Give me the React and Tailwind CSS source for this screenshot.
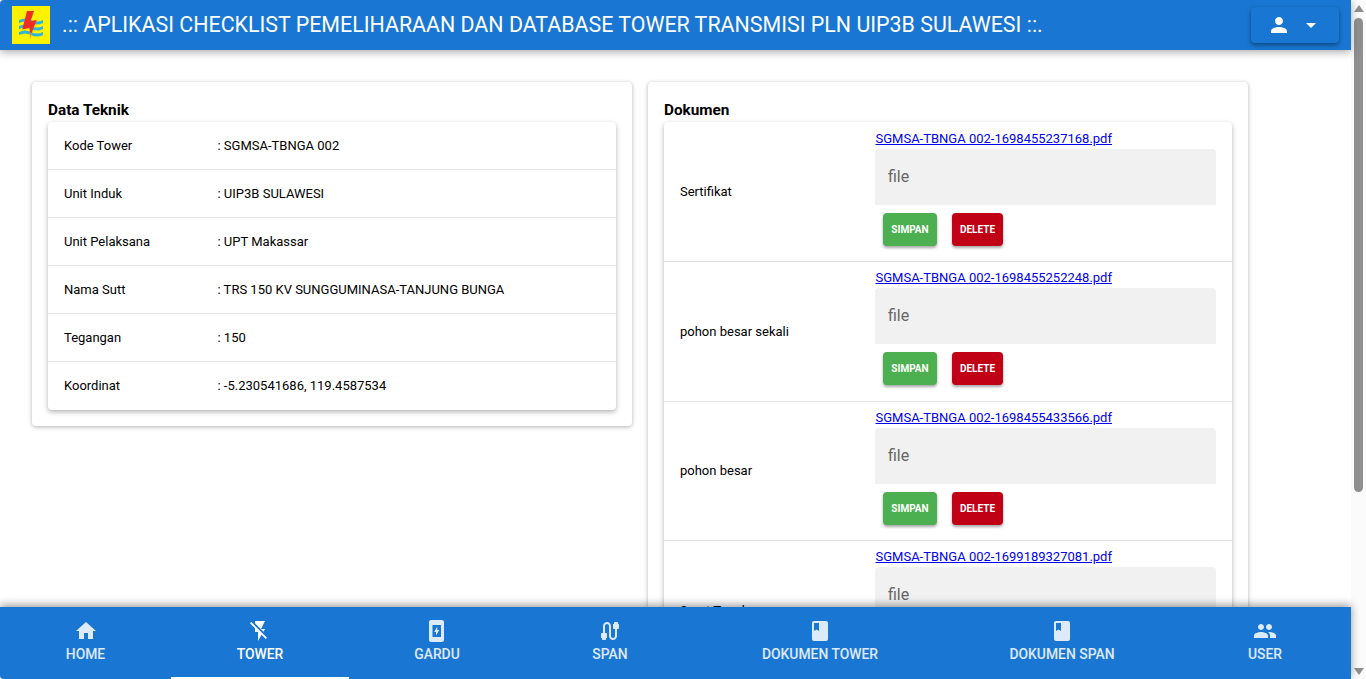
import React from "react";

const bookIcon = "M18 2H6c-1.1 0-2 .9-2 2v16c0 1.1.9 2 2 2h12c1.1 0 2-.9 2-2V4c0-1.1-.9-2-2-2zM6 4h5v8l-2.5-1.5L6 12V4z";

const navItems = [
  { label: "HOME", d: "M10 20v-6h4v6h5v-8h3L12 3 2 12h3v8z" },
  { label: "TOWER", active: true, d: "M3.27 3L2 4.27l5 5V13h3v9l3.58-6.14L17.73 20 19 18.73 3.27 3zM17 10h-4l4-8H7v2.18l8.46 8.46L17 10z" },
  { label: "GARDU", d: "M6 1h11c1.1 0 2 .9 2 2v18c0 1.1-.9 2-2 2H6c-1.100 0-2-.9-2-2V3c0-1.100.9-2 2-2zM7.500 6v12h8.500V6zM11 16.500v-3.500H9.200l3.100-5.500v3.500h1.900z" },
  { label: "SPAN", d: "M20 5V4c0-.55-.45-1-1-1h-2c-.55 0-1 .45-1 1v1h-1v4c0 .55.45 1 1 1h1v7c0 1.1-.9 2-2 2s-2-.9-2-2V7c0-2.21-1.79-4-4-4S5 4.79 5 7v7H4c-.55 0-1 .45-1 1v4h1v1c0 .55.45 1 1 1h2c.55 0 1-.45 1-1v-1h1v-4c0-.55-.45-1-1-1H7V7c0-1.1.9-2 2-2s2 .9 2 2v10c0 2.21 1.79 4 4 4s4-1.79 4-4v-7h1c.55 0 1-.45 1-1V5h-1z" },
  { label: "DOKUMEN TOWER", d: bookIcon },
  { label: "DOKUMEN SPAN", d: bookIcon },
  { label: "USER", d: "M16 11c1.66 0 2.99-1.34 2.99-3S17.66 5 16 5c-1.66 0-3 1.34-3 3s1.34 3 3 3zm-8 0c1.66 0 2.99-1.34 2.99-3S9.66 5 8 5C6.34 5 5 6.34 5 8s1.34 3 3 3zm0 2c-2.33 0-7 1.17-7 3.5V19h14v-2.5c0-2.33-4.67-3.5-7-3.5zm8 0c-.29 0-.62.02-.97.05 1.16.84 1.97 1.97 1.97 3.45V19h6v-2.5c0-2.33-4.67-3.5-7-3.5z" },
];

const teknik = [
  ["Kode Tower", ": SGMSA-TBNGA 002"],
  ["Unit Induk", ": UIP3B SULAWESI"],
  ["Unit Pelaksana", ": UPT Makassar"],
  ["Nama Sutt", ": TRS 150 KV SUNGGUMINASA-TANJUNG BUNGA"],
  ["Tegangan", ": 150"],
  ["Koordinat", ": -5.230541686, 119.4587534"],
];

const dokumen = [
  ["Sertifikat", "SGMSA-TBNGA 002-1698455237168.pdf"],
  ["pohon besar sekali", "SGMSA-TBNGA 002-1698455252248.pdf"],
  ["pohon besar", "SGMSA-TBNGA 002-1698455433566.pdf"],
  ["Surat Tanah", "SGMSA-TBNGA 002-1699189327081.pdf"],
];

const Logo = () => (
  <svg viewBox="0 0 38 38" className="w-[38px] h-[38px] shrink-0">
    <rect width="38" height="38" fill="#fff200" />
    <path d="M7 14c4-2 8-2 12 0s8 2 12 0v3c-4 2-8 2-12 0s-8-2-12 0z" fill="#2bb4dc" />
    <path d="M7 20c4-2 8-2 12 0s8 2 12 0v3c-4 2-8 2-12 0s-8-2-12 0z" fill="#2bb4dc" />
    <path d="M7 26c4-2 8-2 12 0s8 2 12 0v3c-4 2-8 2-12 0s-8-2-12 0z" fill="#2bb4dc" />
    <path d="M19.700 26l-1.400 7.500-.8-7z" fill="#f6921e" />
    <path d="M15 5h7l-3.300 10 6-1L19.700 27l-2-.5V22l-7.400 1.500z" fill="#ee2e24" />
  </svg>
);

const Card = ({ title, children }) => (
  <div className="w-[600px] shrink-0 self-start bg-white rounded shadow-[0_1px_4px_rgba(0,0,0,0.3)] px-4 pt-[18px] pb-4">
    <h2 className="text-[15.300px] leading-5 mb-[2px] font-bold text-black">{title}</h2>
    <div className="bg-white rounded shadow-[0_2px_5px_rgba(0,0,0,0.3)]">{children}</div>
  </div>
);

export default function App() {
  return (
    <div className="h-screen flex overflow-hidden bg-white font-['Roboto',sans-serif]">
      <div className="flex-1 min-w-0 flex flex-col">
        <header className="relative z-10 h-[50px] shrink-0 flex items-center bg-[#1976d2] pl-3 pr-3 rounded-tl shadow-[0_2px_8px_rgba(0,0,0,0.35)]">
          <Logo />
          <h1 className="ml-3 flex-1 text-[21.400px] text-white whitespace-nowrap">
            .:: APLIKASI CHECKLIST PEMELIHARAAN DAN DATABASE TOWER TRANSMISI PLN UIP3B SULAWESI ::.
          </h1>
          <button className="w-[88px] h-9 flex items-center justify-center gap-2 rounded bg-[#1976d2] shadow-[0_2px_4px_rgba(0,0,0,0.4)]">
            <svg viewBox="0 0 24 24" className="w-6 h-6 fill-white">
              <path d="M12 12c2.210 0 4-1.790 4-4s-1.790-4-4-4-4 1.790-4 4 1.790 4 4 4zm0 2c-2.670 0-8 1.340-8 4v2h16v-2c0-2.660-5.330-4-8-4z" />
            </svg>
            <svg viewBox="0 0 24 24" className="w-6 h-6 fill-white">
              <path d="M7 10l5 5 5-5z" />
            </svg>
          </button>
        </header>

        <main className="flex-1 min-h-0 overflow-hidden flex items-start gap-4 pl-8 pt-8">
          <Card title="Data Teknik">
            {teknik.map(([label, value], i) => (
              <div key={label} className={`h-12 flex items-center px-4 text-[13px] text-black ${i < teknik.length - 1 ? "border-b border-[#e0e0e0]" : ""}`}>
                <span className="w-[153.500px] shrink-0">{label}</span>
                <span>{value}</span>
              </div>
            ))}
          </Card>
          <Card title="Dokumen">
            {dokumen.map(([label, file]) => (
              <div key={label} className="h-[139.400px] flex items-center px-4 border-t border-[#e0e0e0] first:border-t-transparent text-[13px] text-black">
                <span className="w-[195px] shrink-0">{label}</span>
                <div className="flex-1 min-w-0 pt-2 self-start">
                  <a href="#" className="block pl-[0.5px] text-[13px] leading-4 text-[#0000ee] underline">{file}</a>
                  <div className="mt-[2px] h-14 bg-[#f1f1f1] rounded-t flex items-center px-[13px] text-[16px] text-[#666]">file</div>
                  <div className="mt-2 ml-2 flex gap-[15px]">
                    <button className="w-[54px] h-[33px] rounded bg-[#4caf50] text-white text-[10px] font-bold shadow-[0_2px_3px_rgba(0,0,0,0.35)]">SIMPAN</button>
                    <button className="w-[51px] h-[33px] rounded bg-[#c00014] text-white text-[10px] font-bold shadow-[0_2px_3px_rgba(0,0,0,0.35)]">DELETE</button>
                  </div>
                </div>
              </div>
            ))}
          </Card>
        </main>

        <nav className="relative z-10 h-[72px] shrink-0 grid grid-cols-[171px_178px_176px_170px_250px_234px_172px] bg-[#1976d2] rounded-bl shadow-[0_-2px_8px_rgba(0,0,0,0.4)]">
          {navItems.map((item) => (
            <div
              key={item.label}
              className={`flex flex-col items-center pt-[12px] text-[13.900px] leading-4 font-medium border-b-2 ${item.active ? "text-white border-white" : "text-white/85 border-transparent"}`}
            >
              <svg viewBox="0 0 24 24" className="w-6 h-6 fill-current">
                <path fillRule="evenodd" d={item.d} />
              </svg>
              <span className="mt-[3px] whitespace-nowrap">{item.label}</span>
            </div>
          ))}
        </nav>
      </div>

      <div className="w-[15px] shrink-0 flex flex-col bg-[#fbfbfb]">
        <div className="h-[18px] shrink-0 flex justify-center pt-[5px]">
          <div className="w-0 h-0 border-x-[5px] border-x-transparent border-b-[7px] border-b-[#8f8f8f]" />
        </div>
        <div className="h-[474px] mx-[3px] shrink-0 rounded-full bg-[#8f8f8f]" />
        <div className="flex-1" />
        <div className="h-[18px] shrink-0 flex justify-center pt-[7px]">
          <div className="w-0 h-0 border-x-[5px] border-x-transparent border-t-[7px] border-t-[#8f8f8f]" />
        </div>
      </div>
    </div>
  );
}
